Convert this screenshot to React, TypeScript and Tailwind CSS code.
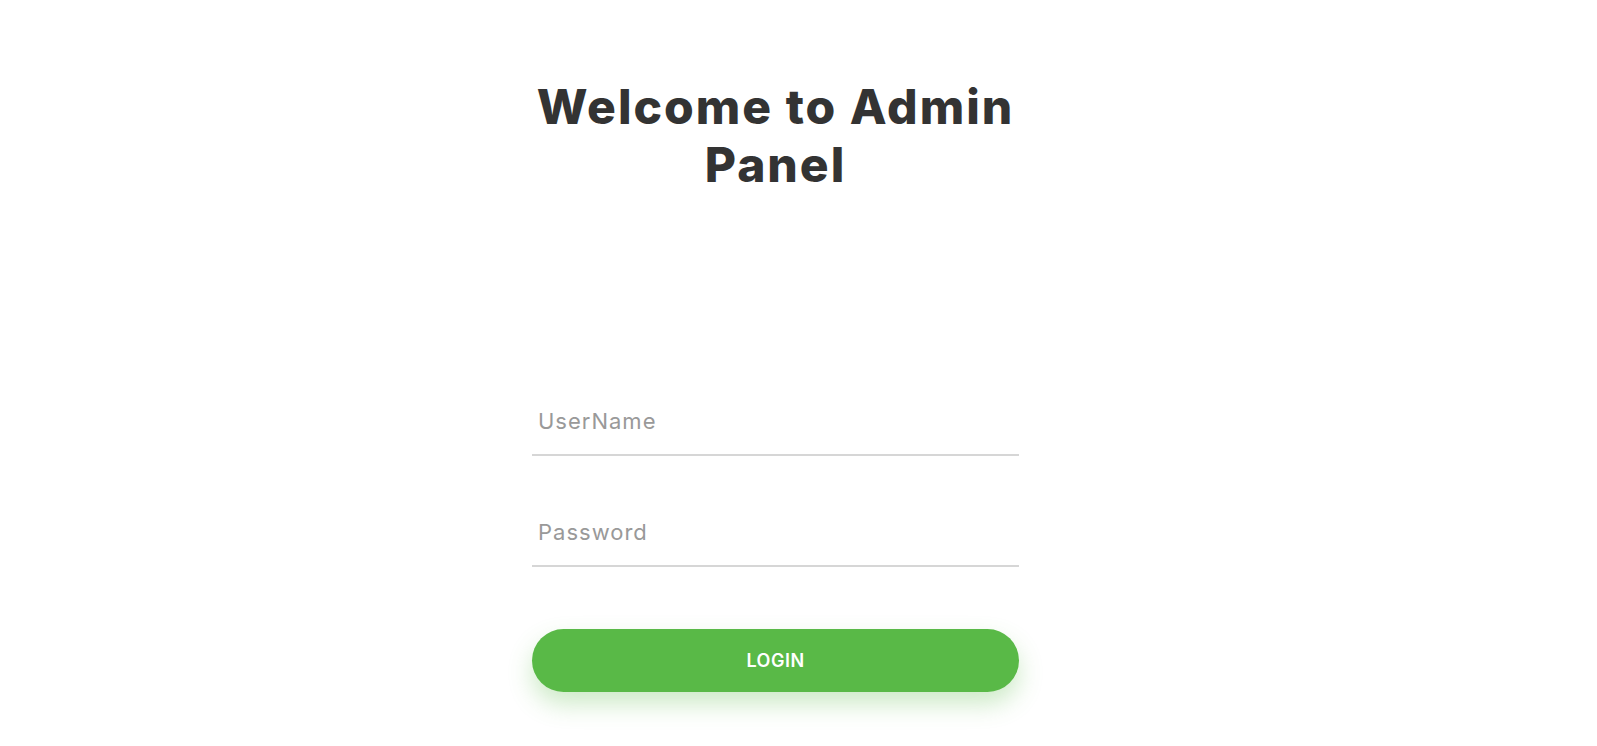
import { useState } from "react";

const AdminLogin: React.FC = () => {
  const [username, setUsername] = useState("");
  const [password, setPassword] = useState("");

  return (
    <div className="min-h-screen w-full bg-white flex justify-center pr-[46px] font-['Inter','Liberation_Sans',sans-serif]">
      <div className="w-[487px] flex flex-col pt-[78px]">
        <h1 className="text-center text-[48px] leading-[58px] font-extrabold text-[#333333] tracking-[2px]">
          Welcome to Admin
          <br />
          Panel
        </h1>

        <form
          className="flex flex-col mt-[210px]"
          onSubmit={(e) => e.preventDefault()}
        >
          <input
            type="text"
            value={username}
            onChange={(e) => setUsername(e.target.value)}
            placeholder="UserName"
            className="h-[52px] pb-[16px] px-[6px] border-b-2 border-[#d6d6d6] text-[22px] tracking-[1px] text-[#333] placeholder:text-[#999999] outline-none bg-transparent"
          />
          <input
            type="password"
            value={password}
            onChange={(e) => setPassword(e.target.value)}
            placeholder="Password"
            className="mt-[59px] h-[52px] pb-[16px] px-[6px] border-b-2 border-[#d6d6d6] text-[22px] tracking-[1px] text-[#333] placeholder:text-[#999999] outline-none bg-transparent"
          />
          <button
            type="submit"
            className="mt-[62px] h-[63px] rounded-full bg-[#59b947] text-white text-[18px] tracking-[0.5px] font-semibold uppercase shadow-[0_12px_24px_rgba(89,185,71,0.3)]"
          >
            Login
          </button>
        </form>
      </div>
    </div>
  );
};

export default AdminLogin;
